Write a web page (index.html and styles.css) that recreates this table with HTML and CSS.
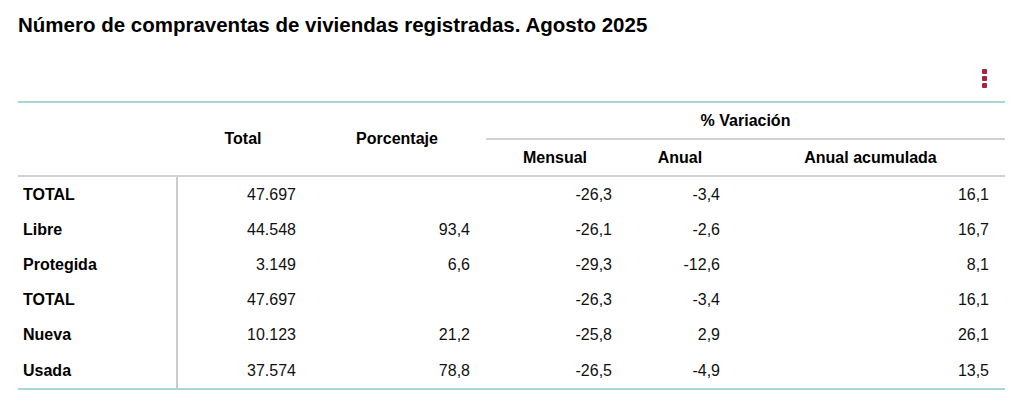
FILE: index.html
```html
<!DOCTYPE html>
<html lang="es">
<head>
<meta charset="utf-8">
<title>Compraventas de viviendas</title>
<link rel="stylesheet" href="styles.css">
</head>
<body>
<div class="page">
  <h1 class="title">Número de compraventas de viviendas registradas. Agosto 2025</h1>
  <div class="toolbar">
    <button class="menu" aria-label="Opciones">
      <span class="dot"></span><span class="dot"></span><span class="dot"></span>
    </button>
  </div>
  <table class="data">
    <colgroup>
      <col class="c-label"><col class="c-total"><col class="c-pct"><col class="c-men"><col class="c-anu"><col class="c-acu">
    </colgroup>
    <thead>
      <tr class="h1">
        <th rowspan="2" class="blank"></th>
        <th rowspan="2" class="span">Total</th>
        <th rowspan="2" class="span">Porcentaje</th>
        <th colspan="3" class="group">% Variación</th>
      </tr>
      <tr class="h2">
        <th class="sub">Mensual</th>
        <th class="sub">Anual</th>
        <th class="sub">Anual acumulada</th>
      </tr>
    </thead>
    <tbody>
      <tr><th class="lbl">TOTAL</th><td class="v-total">47.697</td><td class="v-pct"></td><td class="v-men">-26,3</td><td class="v-anu">-3,4</td><td class="v-acu">16,1</td></tr>
      <tr><th class="lbl">Libre</th><td class="v-total">44.548</td><td class="v-pct">93,4</td><td class="v-men">-26,1</td><td class="v-anu">-2,6</td><td class="v-acu">16,7</td></tr>
      <tr><th class="lbl">Protegida</th><td class="v-total">3.149</td><td class="v-pct">6,6</td><td class="v-men">-29,3</td><td class="v-anu">-12,6</td><td class="v-acu">8,1</td></tr>
      <tr><th class="lbl">TOTAL</th><td class="v-total">47.697</td><td class="v-pct"></td><td class="v-men">-26,3</td><td class="v-anu">-3,4</td><td class="v-acu">16,1</td></tr>
      <tr><th class="lbl">Nueva</th><td class="v-total">10.123</td><td class="v-pct">21,2</td><td class="v-men">-25,8</td><td class="v-anu">2,9</td><td class="v-acu">26,1</td></tr>
      <tr><th class="lbl">Usada</th><td class="v-total">37.574</td><td class="v-pct">78,8</td><td class="v-men">-26,5</td><td class="v-anu">-4,9</td><td class="v-acu">13,5</td></tr>
    </tbody>
  </table>
</div>
</body>
</html>
```
FILE: styles.css
```css
html, body {
  margin: 0;
  padding: 0;
  background: #ffffff;
}

body {
  font-family: "Liberation Sans", Arial, sans-serif;
  color: #000;
}

.page {
  padding: 13px 19px 0 18px;
  width: 987px;
}

.title {
  margin: 0;
  font-size: 20.5px;
  line-height: 24px;
  font-weight: 700;
  color: #000;
}

.toolbar {
  display: flex;
  justify-content: flex-end;
  margin-top: 32px;
  height: 20px;
  padding-right: 18px;
}

.menu {
  display: flex;
  flex-direction: column;
  gap: 2px;
  padding: 0;
  margin: 0;
  border: 0;
  background: transparent;
  cursor: pointer;
}

.dot {
  display: block;
  width: 5px;
  height: 5px;
  border-radius: 1px;
  background: #a3253f;
}

.data {
  margin-top: 12px;
  width: 987px;
  table-layout: fixed;
  border-collapse: separate;
  border-spacing: 0;
  border-top: 2px solid #a9d6d6;
  border-bottom: 2px solid #a9d6d6;
  font-size: 16px;
}

.c-label { width: 160px; }
.c-total { width: 130px; }
.c-pct { width: 178px; }
.c-men { width: 138px; }
.c-anu { width: 112px; }
.c-acu { width: 269px; }

.data th {
  font-weight: 700;
  padding: 0;
}

.h1 th {
  height: 35px;
}

.h2 th {
  height: 35px;
}

.span, .blank {
  vertical-align: middle;
  text-align: center;
  border-bottom: 2px solid #d2d2d2;
}

.group {
  text-align: center;
  vertical-align: middle;
  border-bottom: 2px solid #d2d2d2;
}

.sub {
  text-align: center;
  vertical-align: middle;
  border-bottom: 2px solid #d2d2d2;
}

.data tbody td,
.data tbody th {
  height: 35.2px;
  padding: 0;
  vertical-align: middle;
}

.lbl {
  text-align: left;
  padding-left: 5px !important;
  border-right: 2px solid #cccccc;
}

.data tbody td {
  text-align: right;
  color: #111;
}

.v-total { padding-right: 12px !important; }
.v-pct { padding-right: 16px !important; }
.v-men { padding-right: 12px !important; }
.v-anu { padding-right: 16px !important; }
.v-acu { padding-right: 16px !important; }
```
